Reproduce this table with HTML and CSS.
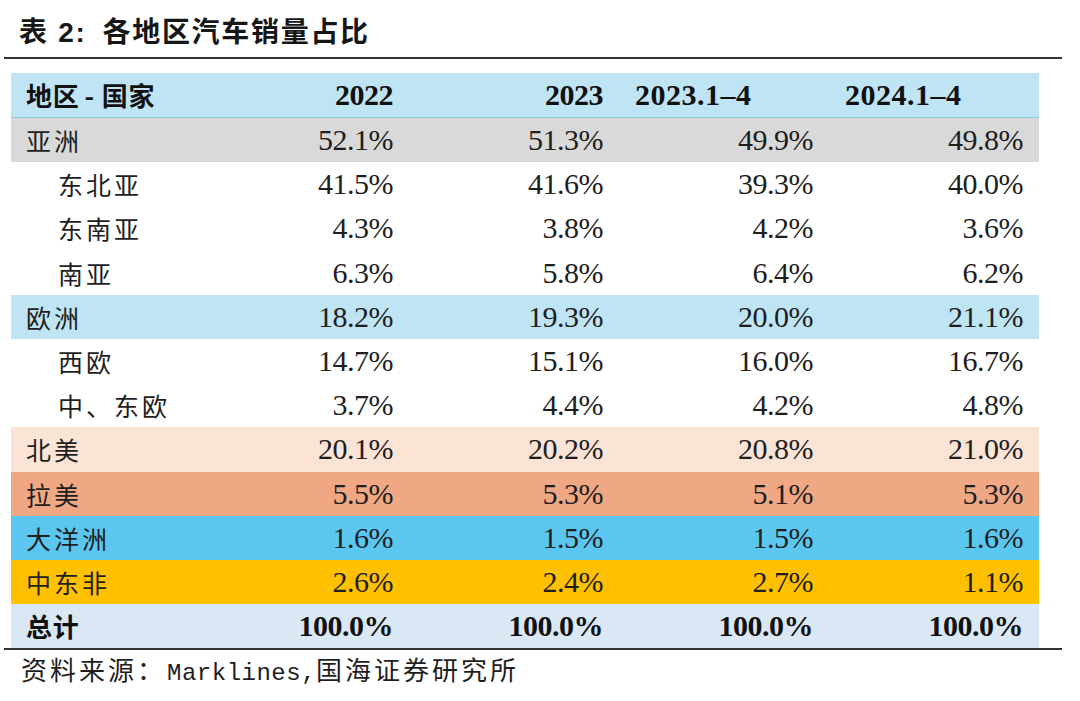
FILE: index.html
```html
<!DOCTYPE html>
<html lang="zh-CN">
<head>
<meta charset="utf-8">
<title>表 2：各地区汽车销量占比</title>
<link rel="stylesheet" href="styles.css">
</head>
<body>
<div class="page">
  <div class="title">表 <span class="title-num">2:</span>各地区汽车销量占比</div>
  <div class="table">
    <div class="row head">
      <div class="label strong">地区<span class="dash">-</span>国家</div>
      <div class="val strong">2022</div>
      <div class="val strong">2023</div>
      <div class="val strong left">2023.1–4</div>
      <div class="val strong left">2024.1–4</div>
    </div>
    <div class="row asia">
      <div class="label">亚洲</div>
      <div class="val">52.1%</div><div class="val">51.3%</div><div class="val">49.9%</div><div class="val">49.8%</div>
    </div>
    <div class="row">
      <div class="label sub">东北亚</div>
      <div class="val">41.5%</div><div class="val">41.6%</div><div class="val">39.3%</div><div class="val">40.0%</div>
    </div>
    <div class="row">
      <div class="label sub">东南亚</div>
      <div class="val">4.3%</div><div class="val">3.8%</div><div class="val">4.2%</div><div class="val">3.6%</div>
    </div>
    <div class="row">
      <div class="label sub">南亚</div>
      <div class="val">6.3%</div><div class="val">5.8%</div><div class="val">6.4%</div><div class="val">6.2%</div>
    </div>
    <div class="row europe">
      <div class="label">欧洲</div>
      <div class="val">18.2%</div><div class="val">19.3%</div><div class="val">20.0%</div><div class="val">21.1%</div>
    </div>
    <div class="row">
      <div class="label sub">西欧</div>
      <div class="val">14.7%</div><div class="val">15.1%</div><div class="val">16.0%</div><div class="val">16.7%</div>
    </div>
    <div class="row">
      <div class="label sub">中、东欧</div>
      <div class="val">3.7%</div><div class="val">4.4%</div><div class="val">4.2%</div><div class="val">4.8%</div>
    </div>
    <div class="row namerica">
      <div class="label">北美</div>
      <div class="val">20.1%</div><div class="val">20.2%</div><div class="val">20.8%</div><div class="val">21.0%</div>
    </div>
    <div class="row latam">
      <div class="label">拉美</div>
      <div class="val">5.5%</div><div class="val">5.3%</div><div class="val">5.1%</div><div class="val">5.3%</div>
    </div>
    <div class="row oceania">
      <div class="label">大洋洲</div>
      <div class="val">1.6%</div><div class="val">1.5%</div><div class="val">1.5%</div><div class="val">1.6%</div>
    </div>
    <div class="row mea">
      <div class="label">中东非</div>
      <div class="val">2.6%</div><div class="val">2.4%</div><div class="val">2.7%</div><div class="val">1.1%</div>
    </div>
    <div class="row total">
      <div class="label strong">总计</div>
      <div class="val strong">100.0%</div><div class="val strong">100.0%</div><div class="val strong">100.0%</div><div class="val strong">100.0%</div>
    </div>
  </div>
  <div class="source">资料来源：<span class="latin">Marklines,</span>国海证券研究所</div>
</div>
</body>
</html>
```

FILE: styles.css
```css
html, body {
  margin: 0;
  padding: 0;
  background: #ffffff;
}

.page {
  margin-left: 4px;
  width: 1058px;
  color: #1e1e1e;
}

.title {
  padding: 13px 0 4px 15px;
  font-family: "Liberation Sans", "Noto Sans CJK SC", sans-serif;
  font-weight: bold;
  font-size: 28px;
  line-height: 40px;
  letter-spacing: 1.7px;
  color: #161616;
  border-bottom: 2px solid #333333;
}

.title-num {
  margin-right: 16px;
}

.table {
  margin: 14px 0 0 7px;
  width: 1028px;
}

.row {
  display: grid;
  grid-template-columns: 188px repeat(4, 210px);
  height: 44.2px;
  background: #ffffff;
}

.row.head {
  height: 44px;
  background: #bfe4f4;
  border-bottom: 1px solid #8ec8df;
}

.row.asia { background: #d9d9d9; }
.row.europe { background: #bfe4f4; }
.row.namerica { background: #fbe3d6; }
.row.latam { background: #f0a784; }
.row.oceania { background: #5bc6ef; }
.row.mea { background: #ffc000; }
.row.total { background: #dae8f6; }

.label {
  padding-left: 15px;
  font-family: "Noto Sans CJK SC", sans-serif;
  font-size: 25px;
  line-height: 44px;
  letter-spacing: 3px;
  white-space: nowrap;
}

.label.sub {
  padding-left: 47px;
}

.label.strong {
  font-size: 26px;
  font-weight: bold;
  letter-spacing: 0.7px;
  color: #111111;
}

.dash {
  margin: 0 7px 0 5px;
}

.val {
  padding-right: 16px;
  text-align: right;
  font-family: "Liberation Serif", serif;
  font-size: 30px;
  line-height: 44px;
  letter-spacing: -0.5px;
  white-space: nowrap;
}

.val.strong {
  font-weight: bold;
  color: #111111;
}

.val.left {
  text-align: left;
  padding-left: 16px;
  padding-right: 0;
  letter-spacing: 0.5px;
}

.source {
  border-top: 2px solid #333333;
  padding-left: 17px;
  font-family: "Noto Sans CJK SC", sans-serif;
  font-size: 26px;
  line-height: 38px;
  letter-spacing: 3px;
  color: #1e1e1e;
}

.source .latin {
  margin-left: 1px;
  font-family: "Liberation Mono", monospace;
  font-size: 24px;
  letter-spacing: 0.5px;
}
```
